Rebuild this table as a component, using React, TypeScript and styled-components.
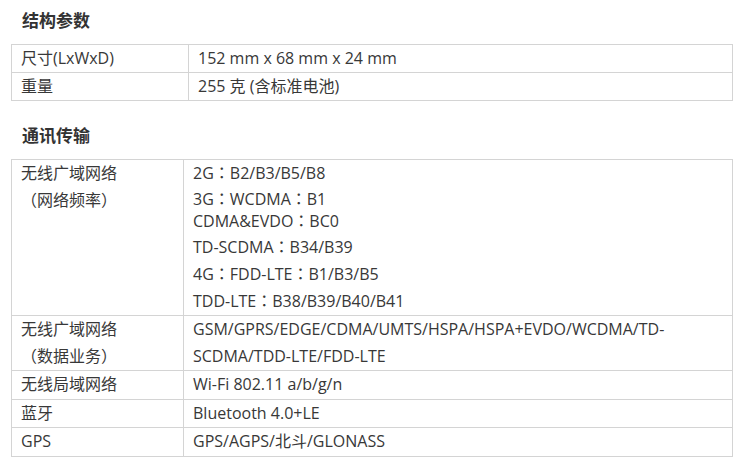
import styled, { createGlobalStyle } from "styled-components";

const Global = createGlobalStyle`
  html, body { margin: 0; padding: 0; background: #fff; }
  body { font-family: "Open Sans", "Noto Sans CJK SC", sans-serif; color: #383838; }
`;

const Page = styled.div`
  width: 750px;
  padding: 8px 17px 0 11px;
  box-sizing: border-box;
`;

const SectionTitle = styled.h2`
  margin: 0 0 0 11px;
  height: 36px;
  font-size: 17px;
  font-weight: 700;
  line-height: 24px;
  color: #333;
  font-family: "Noto Sans CJK SC", sans-serif;
`;

const Table = styled.table`
  width: 100%;
  border-collapse: collapse;
  margin-bottom: 22px;
  font-size: 16px;
  line-height: 27px;
`;

const Row = styled.tr<{ $h?: number }>`
  height: ${({ $h }) => ($h ? `${$h}px` : "auto")};
`;

const Cell = styled.td<{ $w?: number }>`
  border: 1px solid #d4d4d4;
  padding: 0 8px 0 9px;
  vertical-align: top;
  width: ${({ $w }) => ($w ? `${$w}px` : "auto")};
`;

const Line = styled.div`
  height: 27px;
  white-space: nowrap;
`;

// two lines that sit closer together than the rest
const Group = styled.div`
  padding: 1px 0 2px;
  ${Line} {
    height: 22px;
    line-height: 22px;
  }
`;

// full-width colon, centred as in the original font
const Sep = styled.span`
  font-family: "Noto Sans CJK TC", sans-serif;
  line-height: 0;
`;

const C = () => <Sep>：</Sep>;

export default function App() {
  return (
    <Page>
      <Global />
      <SectionTitle>结构参数</SectionTitle>
      <Table>
        <tbody>
          <Row $h={28}>
            <Cell $w={159}><Line>尺寸(LxWxD)</Line></Cell>
            <Cell><Line>152 mm x 68 mm x 24 mm</Line></Cell>
          </Row>
          <Row $h={27}>
            <Cell><Line>重量</Line></Cell>
            <Cell><Line>255 克 (含标准电池)</Line></Cell>
          </Row>
        </tbody>
      </Table>
      <SectionTitle>通讯传输</SectionTitle>
      <Table>
        <tbody>
          <Row>
            <Cell $w={154}>
              <Line>无线广域网络</Line>
              <Line>（网络频率）</Line>
            </Cell>
            <Cell>
              <Line>2G<C />B2/B3/B5/B8</Line>
              <Group>
                <Line>3G<C />WCDMA<C />B1</Line>
                <Line>CDMA&amp;EVDO<C />BC0</Line>
              </Group>
              <Line>TD-SCDMA<C />B34/B39</Line>
              <Line>4G<C />FDD-LTE<C />B1/B3/B5</Line>
              <Line>TDD-LTE<C />B38/B39/B40/B41</Line>
            </Cell>
          </Row>
          <Row>
            <Cell>
              <Line>无线广域网络</Line>
              <Line>（数据业务）</Line>
            </Cell>
            <Cell>
              <Line>GSM/GPRS/EDGE/CDMA/UMTS/HSPA/HSPA+EVDO/WCDMA/TD-</Line>
              <Line>SCDMA/TDD-LTE/FDD-LTE</Line>
            </Cell>
          </Row>
          <Row $h={29}>
            <Cell><Line>无线局域网络</Line></Cell>
            <Cell><Line>Wi-Fi 802.11 a/b/g/n</Line></Cell>
          </Row>
          <Row $h={26}>
            <Cell><Line>蓝牙</Line></Cell>
            <Cell><Line>Bluetooth 4.0+LE</Line></Cell>
          </Row>
          <Row $h={29}>
            <Cell><Line>GPS</Line></Cell>
            <Cell><Line>GPS/AGPS/北斗/GLONASS</Line></Cell>
          </Row>
        </tbody>
      </Table>
    </Page>
  );
}
